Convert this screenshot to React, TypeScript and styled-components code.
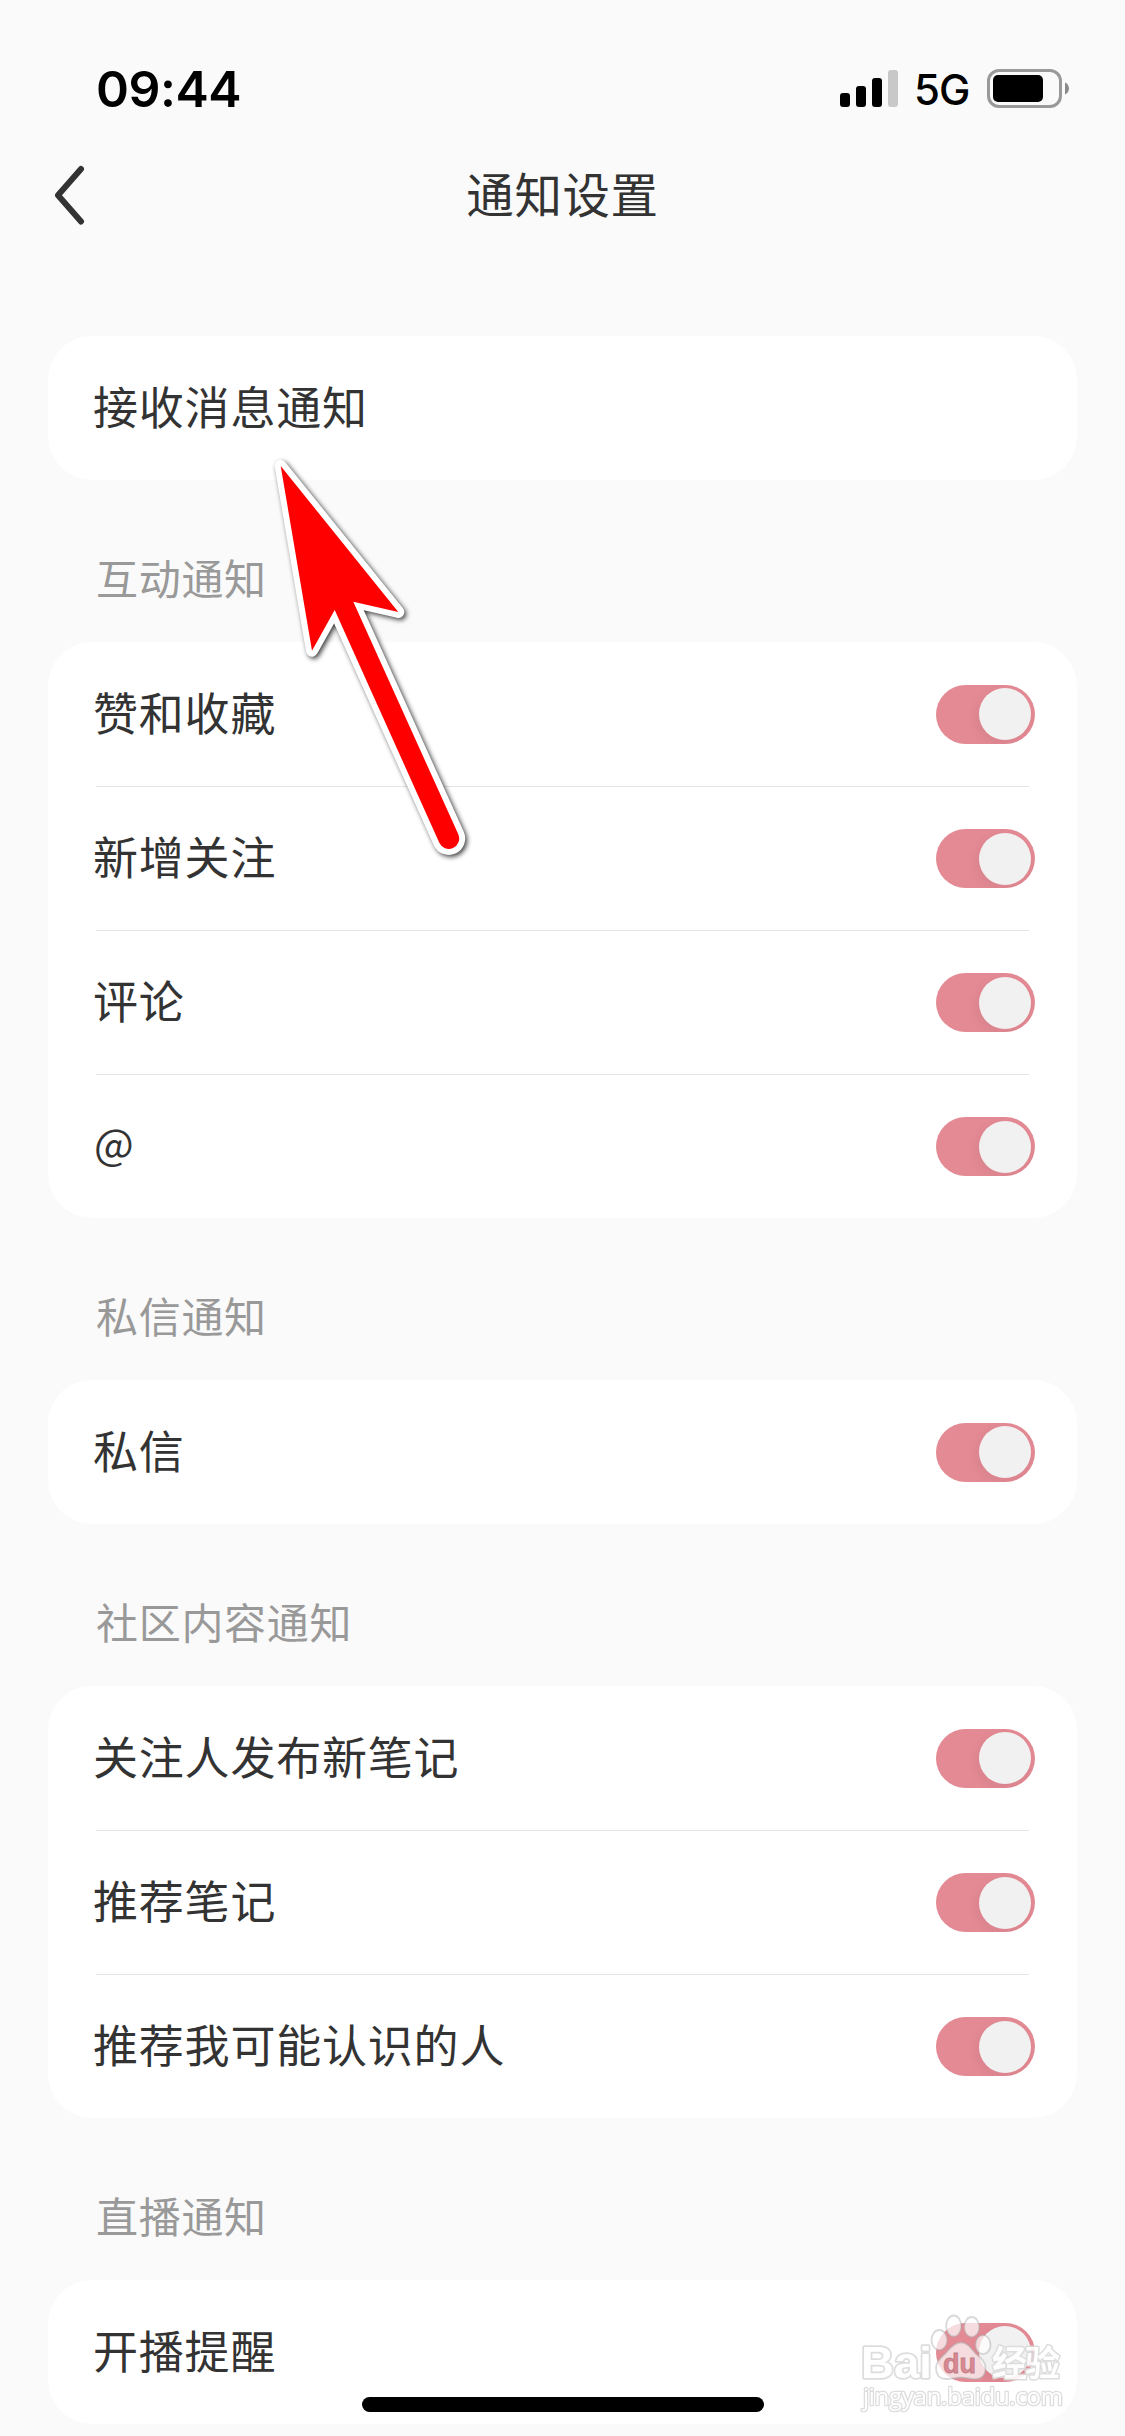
import React from "react";
import styled, { createGlobalStyle } from "styled-components";

const GlobalStyle = createGlobalStyle`
  *, *::before, *::after { box-sizing: border-box; }
  body {
    margin: 0;
    background: #fafafa;
    font-family: "Noto Sans CJK SC", "Noto Sans", sans-serif;
  }
`;

const Screen = styled.div`
  position: relative;
  display: flex;
  flex-direction: column;
  width: 1125px;
  height: 2436px;
  overflow: hidden;
  background: #fafafa;
  color: #333;
`;

const StatusBar = styled.header`
  display: flex;
  align-items: center;
  justify-content: space-between;
  height: 132px;
  padding: 45px 56px 0 96px;
  color: #000;
  font-family: Inter, sans-serif;
`;

const Clock = styled.time`
  font-size: 50px;
  font-weight: 600;
  line-height: 60px;
  letter-spacing: -0.5px;
`;

const StatusIcons = styled.div`
  display: flex;
  align-items: center;
`;

const Network = styled.span`
  width: 89px;
  padding: 3px 0 0 16px;
  font-size: 42px;
  font-weight: 450;
  line-height: 60px;
  letter-spacing: -1px;
`;

const Signal = styled.svg`
  display: block;
  width: 58px;
  height: 39px;
`;

const Battery = styled.svg`
  display: block;
  width: 82px;
  height: 39px;
`;

const NavBar = styled.nav`
  display: grid;
  grid-template-columns: 120px 1fr 120px;
  align-items: center;
  height: 126px;
`;

const BackButton = styled.button`
  display: flex;
  width: 120px;
  height: 126px;
  padding: 33px 0 0 54px;
  border: 0;
  background: none;
`;

const Title = styled.h1`
  margin: 0;
  padding-bottom: 5px;
  text-align: center;
  font-size: 47.5px;
  font-weight: 400;
  line-height: 70px;
  letter-spacing: 0.6px;
`;

const Content = styled.main`
  display: flex;
  flex-direction: column;
  padding: 78px 48px 0;
`;

const Group = styled.section`
  display: flex;
  flex-direction: column;
`;

const GroupLabel = styled.h2`
  height: 162px;
  margin: 0;
  padding: 66px 0 0 48px;
  color: #999;
  font-size: 42px;
  font-weight: 400;
  line-height: 62px;
  letter-spacing: 0.7px;
`;

const Card = styled.ul`
  margin: 0;
  padding: 0 48px;
  list-style: none;
  border-radius: 44px;
  background: #fff;
`;

const Row = styled.li`
  display: flex;
  align-items: center;
  justify-content: space-between;
  height: 144px;
  & + & {
    border-top: 1px solid #e5e5e5;
  }
`;

const RowLabel = styled.span<{ $latin: boolean }>`
  margin-left: ${(p) => (p.$latin ? -2 : -3)}px;
  padding-bottom: ${(p) => (p.$latin ? 10 : 5)}px;
  font-size: ${(p) => (p.$latin ? 42 : 45)}px;
  font-weight: 400;
  line-height: 66px;
  letter-spacing: 0.8px;
`;

const Toggle = styled.button`
  display: flex;
  align-items: center;
  justify-content: flex-end;
  width: 99px;
  height: 59px;
  margin-right: -6px;
  padding: 0 4px 0 0;
  overflow: hidden;
  border: 0;
  border-radius: 30px;
  background: #e38a94;
`;

const Knob = styled.span`
  width: 52px;
  height: 52px;
  border-radius: 50%;
  background: #f1f1f1;
  box-shadow: -2px 4px 12px rgba(90, 30, 40, 0.07);
`;

const HomeIndicator = styled.div`
  position: absolute;
  left: 362px;
  bottom: 24px;
  width: 402px;
  height: 15px;
  border-radius: 8px;
  background: #000;
`;

const Pointer = styled.svg`
  position: absolute;
  left: 260px;
  top: 440px;
`;

const Watermark = styled.svg`
  position: absolute;
  left: 850px;
  top: 2300px;
`;

type GroupData = { label?: string; rows: { text: string; toggle: boolean }[] };

const on = (text: string) => ({ text, toggle: true });

const groups: GroupData[] = [
  { rows: [{ text: "接收消息通知", toggle: false }] },
  { label: "互动通知", rows: [on("赞和收藏"), on("新增关注"), on("评论"), on("@")] },
  { label: "私信通知", rows: [on("私信")] },
  { label: "社区内容通知", rows: [on("关注人发布新笔记"), on("推荐笔记"), on("推荐我可能认识的人")] },
  { label: "直播通知", rows: [on("开播提醒")] },
];

function SignalIcon() {
  return (
    <Signal viewBox="0 0 58 39">
      <rect x="0" y="24" width="10" height="14" rx="3" />
      <rect x="16" y="17" width="10" height="21" rx="3" />
      <rect x="32" y="9" width="10" height="29" rx="3" />
      <rect x="48" y="1" width="10" height="37" rx="3" fill="#c8c8c8" />
    </Signal>
  );
}

function BatteryIcon() {
  return (
    <Battery viewBox="0 0 82 39">
      <rect x="1.5" y="1.5" width="72" height="36" rx="10.5" fill="none" stroke="#999" strokeWidth="3" />
      <rect x="6" y="6" width="50" height="27" rx="5" />
      <path d="M78 13.5c2.6 1.2 4 3.4 4 6s-1.4 4.8-4 6z" fill="#8a8a8a" />
    </Battery>
  );
}

function ArrowPointer() {
  return (
    <Pointer width="240" height="450" viewBox="260 440 240 450">
      <path
        d="M280.7 466L398.3 612L353.3 601.7L458.3 834.3A10.3 10.3 0 0 1 439.3 842.7L334.7 610L312 650.7Z"
        fill="#f00"
        stroke="#fff"
        strokeWidth="12"
        strokeLinejoin="round"
        style={{ paintOrder: "stroke", filter: "drop-shadow(2px 2px 2.5px rgba(0,0,0,0.75))" }}
      />
    </Pointer>
  );
}

const WatermarkText = styled.text`
  fill: #fff;
  stroke: #dadada;
  stroke-linejoin: round;
  paint-order: stroke;
`;

function BaiduWatermark() {
  return (
    <Watermark width="230" height="120" viewBox="850 2300 230 120">
      <g opacity="0.9">
        <WatermarkText x="861" y="2378" fontSize="45" fontWeight="700" strokeWidth="3.5" fontFamily="Liberation Sans, sans-serif" textLength="71" lengthAdjust="spacingAndGlyphs">
          Bai
        </WatermarkText>
        <WatermarkText x="992" y="2375.5" fontSize="35" fontWeight="700" strokeWidth="3" fontFamily="Noto Sans CJK SC, sans-serif" textLength="68">
          经验
        </WatermarkText>
        <WatermarkText x="863" y="2405" fontSize="24" strokeWidth="2.6" fontFamily="Open Sans, sans-serif" textLength="200">
          jingyan.baidu.com
        </WatermarkText>
      </g>
      <g fill="#fff" fillOpacity="0.7" stroke="#aaa" strokeOpacity="0.45" strokeWidth="1.8">
        <ellipse cx="939.3" cy="2340" rx="7.8" ry="10" />
        <ellipse cx="953.7" cy="2326" rx="7.5" ry="10.5" />
        <ellipse cx="971.7" cy="2327" rx="7.5" ry="10" />
        <ellipse cx="983" cy="2344.7" rx="7.5" ry="9.5" />
        <path d="M961 2342.5C967 2342.5 971 2348 975 2353C979 2357 986 2361 985.5 2369C985 2376 981 2379 975 2379C969 2379 966 2377.5 961 2377.5C955 2377.5 951 2379 946 2379C939 2379 936 2374 936 2368C936 2361 942 2357 946 2353C950 2348 955 2342.5 961 2342.5Z" />
      </g>
      <text x="943" y="2373" fontSize="28" fontWeight="700" fill="#dc8791" stroke="#b98088" strokeWidth="0.8" fontFamily="Liberation Sans, sans-serif" textLength="33" lengthAdjust="spacingAndGlyphs">
        du
      </text>
    </Watermark>
  );
}

export default function App() {
  return (
    <>
      <GlobalStyle />
      <Screen>
        <StatusBar>
          <Clock>09:44</Clock>
          <StatusIcons>
            <SignalIcon />
            <Network>5G</Network>
            <BatteryIcon />
          </StatusIcons>
        </StatusBar>
        <NavBar>
          <BackButton aria-label="返回">
            <svg width="32" height="60" viewBox="0 0 32 60" fill="none" stroke="#333" strokeWidth="6" strokeLinecap="round" strokeLinejoin="round">
              <path d="M27 4L4 30.3L27 56.5" />
            </svg>
          </BackButton>
          <Title>通知设置</Title>
        </NavBar>
        <Content>
          {groups.map((group, i) => (
            <Group key={i}>
              {group.label && <GroupLabel>{group.label}</GroupLabel>}
              <Card>
                {group.rows.map((row) => (
                  <Row key={row.text}>
                    <RowLabel $latin={row.text === "@"}>{row.text}</RowLabel>
                    {row.toggle && (
                      <Toggle role="switch" aria-checked="true">
                        <Knob />
                      </Toggle>
                    )}
                  </Row>
                ))}
              </Card>
            </Group>
          ))}
        </Content>
        <HomeIndicator />
        <ArrowPointer />
        <BaiduWatermark />
      </Screen>
    </>
  );
}
